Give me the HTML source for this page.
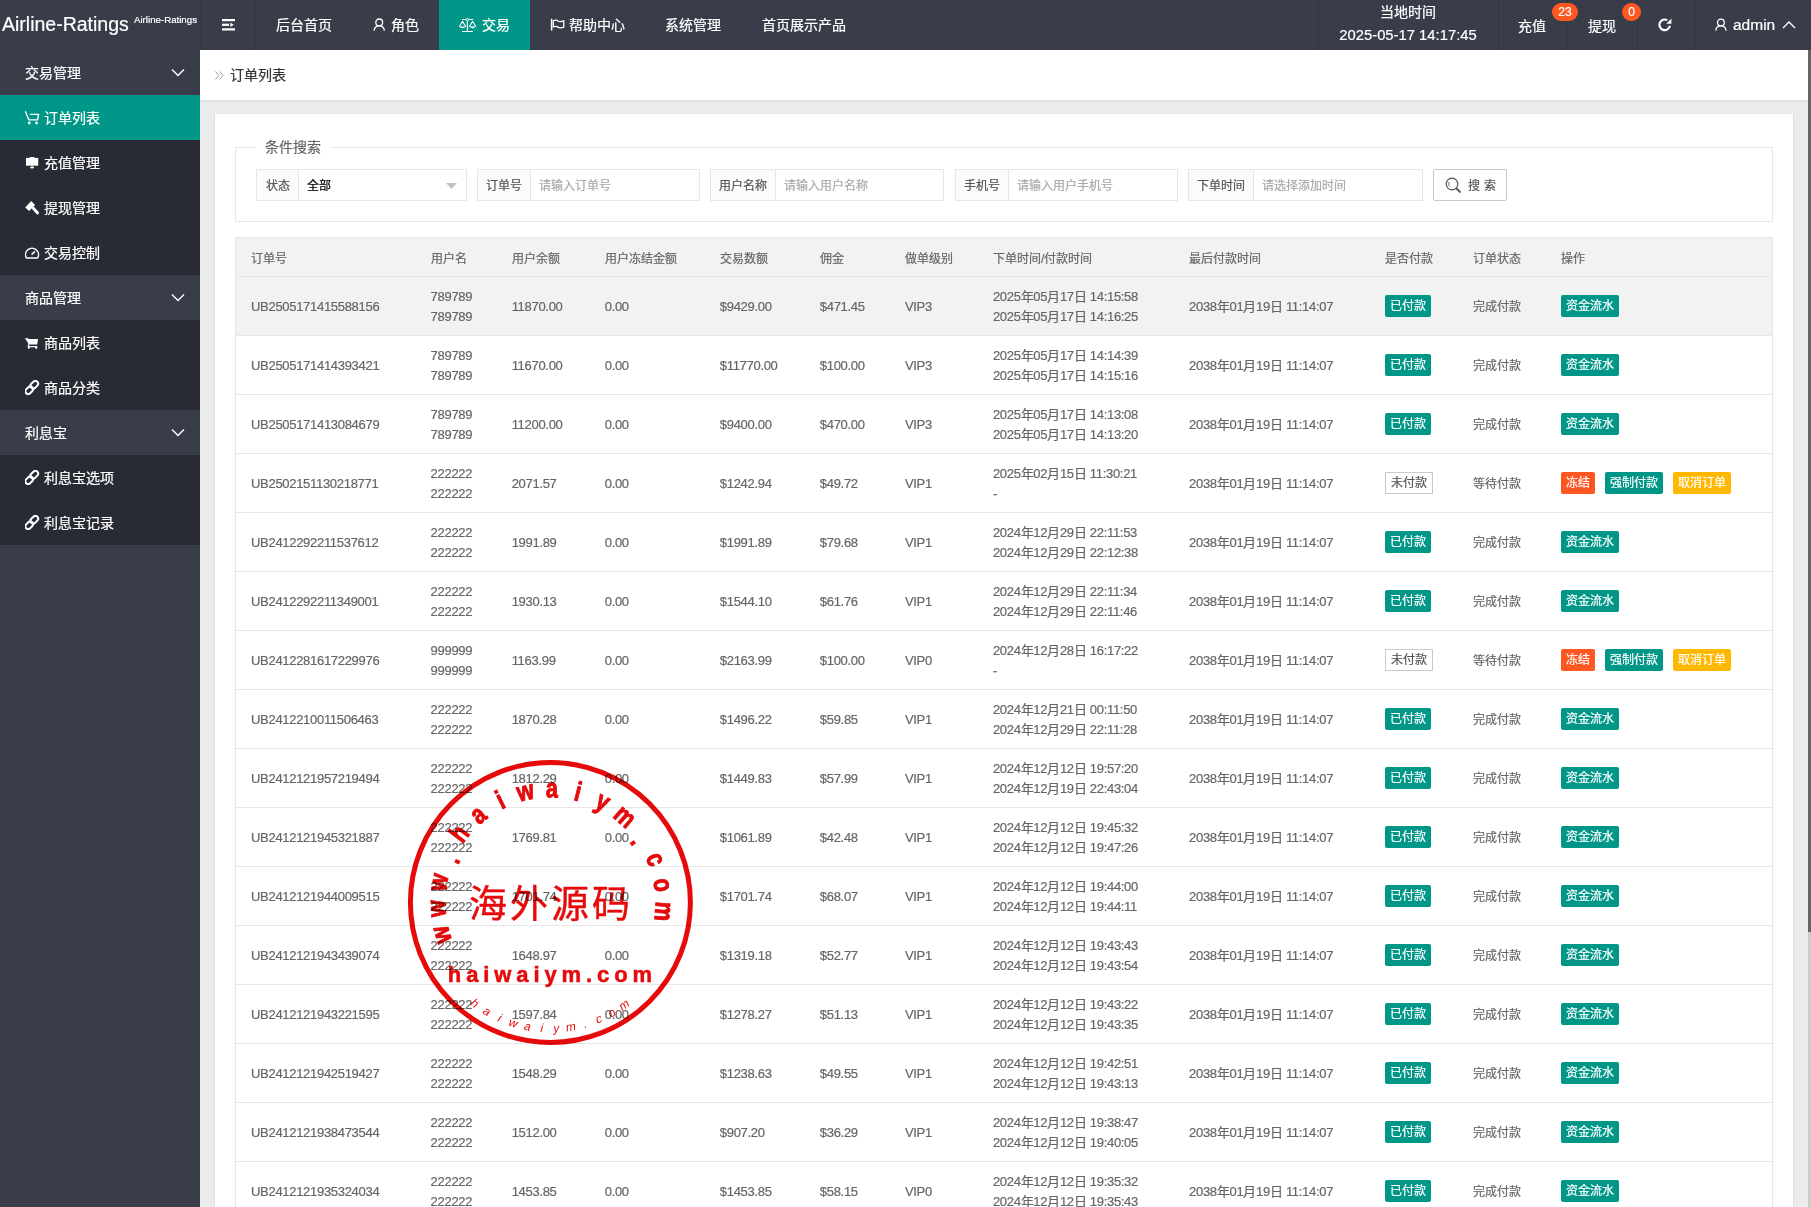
<!DOCTYPE html>
<html lang="zh-CN">
<head>
<meta charset="utf-8">
<title>Airline-Ratings</title>
<style>
*{box-sizing:border-box;margin:0;padding:0}
html,body{width:1811px;height:1207px;overflow:hidden}
body{-webkit-text-stroke:0.2px currentColor;font-family:"Liberation Sans",sans-serif;background:#ececec;color:#666;font-size:12px;position:relative}
.abs{position:absolute}
/* header */
#hd{position:absolute;left:0;top:0;width:1811px;height:50px;background:#393D49;color:#fff}
#hd .sep{position:absolute;top:0;width:1px;height:50px;background:#32363f}
#logo1{position:absolute;left:2px;top:12px;font-size:19.5px;line-height:24px;color:#fff;white-space:nowrap}
#logo2{position:absolute;left:134px;top:14px;font-size:9.7px;line-height:12px;color:#fff;white-space:nowrap}
.nav{position:absolute;top:0;height:50px;line-height:50px;font-size:14px;color:#fff;white-space:nowrap}
.nav svg{position:absolute}
#act{position:absolute;left:439px;top:0;width:91px;height:50px;background:#009688}
.badge{position:absolute;z-index:2;top:3px;height:18px;line-height:18px;border-radius:9px;background:#FF5722;color:#fff;font-size:12px;text-align:center}
/* sidebar */
#sd{position:absolute;left:0;top:50px;width:200px;height:1157px;background:#393D49}
.grp{position:absolute;left:0;width:200px;height:45px;line-height:45px;background:#393D49;color:#fff;font-size:14px}
.grp span{position:absolute;left:25px;top:1px}
.grp svg{position:absolute;left:171px;top:18px}
.sub{position:absolute;left:0;width:200px;height:45px;line-height:45px;background:#282B33;color:#fff;font-size:14px}
.sub span{position:absolute;left:44px;top:1px}
.sub svg{position:absolute;left:25px;top:15px}
.sub.on{background:#009688}
/* breadcrumb */
#bc{position:absolute;left:200px;top:50px;width:1608px;height:50px;background:#fff;box-shadow:0 1px 2px rgba(0,0,0,.08)}
#bc .t{position:absolute;left:30px;top:0;line-height:50px;font-size:14px;color:#333}
/* scrollbar */
#sb{position:absolute;left:1808px;top:50px;width:3px;height:882px;background:#646464}
#sbt{position:absolute;left:1808px;top:932px;width:3px;height:275px;background:#cdcdcd}
/* card */
#card{position:absolute;left:215px;top:114px;width:1578px;height:1100px;background:#fff;box-shadow:1px 0 1px #e0e0e0,-1px 0 1px #e0e0e0}
#fs{position:absolute;left:20px;top:33px;width:1538px;height:75px;border:1px solid #e6e6e6}
#lg{position:absolute;left:40px;top:23px;padding:0 10px;background:#fff;font-size:14px;line-height:20px;color:#666}
.ig{position:absolute;top:55px;height:32px;border:1px solid #e6e6e6;background:#fff}
.ig .lb{position:absolute;left:0;top:0;height:30px;line-height:33px;background:#FBFBFB;border-right:1px solid #e6e6e6;color:#555;font-size:12px;text-align:center}
.ig .ph{position:absolute;top:0;line-height:33px;font-size:12px;color:#a9a9a9;white-space:nowrap}
#btn{position:absolute;left:1218px;top:55px;width:74px;height:32px;border:1px solid #C9C9C9;border-radius:2px;background:#fff;color:#555}
/* table */
#tb{position:absolute;left:20px;top:123px;border-collapse:collapse;table-layout:fixed;width:1538px;border:1px solid #e6e6e6}
#tb th{height:39px;background:#f2f2f2;text-align:left;font-weight:normal;padding:0 15px;font-size:12px;color:#666;border-bottom:1px solid #e6e6e6;white-space:nowrap;overflow:hidden}
#tb td{height:59px;padding:2px 15px 0;font-size:13px;letter-spacing:-0.3px;color:#666;border-bottom:1px solid #e6e6e6;white-space:nowrap;line-height:20px;vertical-align:middle}
#tb tr.hov td{background:#f2f2f2}
.two{line-height:20px}
.bd{display:inline-block;position:relative;top:-1px;letter-spacing:0;height:22px;line-height:23px;padding:0 5px;font-size:12px;color:#fff;border-radius:2px;margin-right:10px;vertical-align:middle}
.bd.g{background:#009688}
.bd.r{background:#FF5722}
.bd.y{background:#FFB800}
.bd.o{border:1px solid #C9C9C9;color:#555;background:#fff;line-height:21px;border-radius:0}
/* stamp */
#stamp{position:absolute;left:400px;top:750px;width:300px;height:300px;mix-blend-mode:multiply}
#stamp text{fill:#e60a0a;text-anchor:middle}
#stamp .t1{font-family:"Liberation Sans",sans-serif;font-weight:bold;font-size:27px;dominant-baseline:central;stroke:#e60a0a;stroke-width:1px}
#stamp .t3{font-family:"Liberation Sans",sans-serif;font-size:12px;dominant-baseline:central;font-style:italic}
#stamp .t2{font-family:"Liberation Serif",serif;font-size:38px;letter-spacing:3px;stroke:#e60a0a;stroke-width:0.4px}
#stamp .t4{font-family:"Liberation Sans",sans-serif;font-weight:bold;font-size:22px;letter-spacing:4.9px;stroke:#e60a0a;stroke-width:0.5px}
</style>
</head>
<body>
<div id="hd">
  <div id="logo1">Airline-Ratings</div>
  <div id="logo2">Airline-Ratings</div>
  <div class="sep" style="left:200px"></div>
  <div class="sep" style="left:255px"></div>
  <svg class="abs" style="left:221px;top:18px" width="15" height="14" viewBox="0 0 15 14"><rect x="1" y="1" width="13" height="2.2" fill="#fff"/><rect x="1" y="5.7" width="7" height="2.2" fill="#fff"/><path d="M9.3 4.8 L12.8 6.8 L9.3 8.9Z" fill="#fff"/><rect x="1" y="10.3" width="13" height="2.2" fill="#fff"/></svg>
  <div class="nav" style="left:276px">后台首页</div>
  <svg class="abs" style="left:372px;top:17px" width="15" height="15" viewBox="0 0 15 15"><circle cx="7.2" cy="5.4" r="3.4" fill="none" stroke="#fff" stroke-width="1.3"/><path d="M2 13.6 C2.5 10 4.5 8.8 7.2 8.8 C9.9 8.8 11.9 10 12.4 13.6" fill="none" stroke="#fff" stroke-width="1.3"/></svg>
  <div class="nav" style="left:391px">角色</div>
  <div id="act"></div>
  <svg class="abs" style="left:458px;top:18px" width="19" height="15" viewBox="0 0 19 15"><path d="M4 1.5 H8.2 M10.6 1.5 H15.2 M9.4 2.7 V13.5 M4 13.5 H15" stroke="#fff" stroke-width="1.2" fill="none"/><circle cx="9.4" cy="1.5" r="1.1" fill="none" stroke="#fff" stroke-width="1"/><path d="M4.5 3.3 L1.3 8.8 M4.5 3.3 L7.8 8.8 M14.6 3.3 L11.3 8.8 M14.6 3.3 L17.9 8.8" stroke="#fff" stroke-width="1.1" fill="none"/><path d="M1.1 8.6 Q4.5 12 8 8.6 Z M11.1 8.6 Q14.6 12 18.1 8.6 Z" fill="#fff"/></svg>
  <div class="nav" style="left:482px">交易</div>
  <svg class="abs" style="left:549px;top:18px" width="16" height="14" viewBox="0 0 16 14"><path d="M2.6 0.8 V12.6" stroke="#fff" stroke-width="1.5"/><path d="M4.3 2.9 C6 1.8 8 2.2 9.5 3.2 C11 4 12.8 3.6 14.8 2.9 V9.1 C12.8 9.8 11 10.2 9.5 9.4 C8 8.4 6 8.2 4.3 8.8 Z" fill="none" stroke="#fff" stroke-width="1.3"/></svg>
  <div class="nav" style="left:569px">帮助中心</div>
  <div class="nav" style="left:665px">系统管理</div>
  <div class="nav" style="left:762px">首页展示产品</div>

  <div class="sep" style="left:1318px"></div>
  <div class="abs" style="left:1318px;top:4px;width:180px;text-align:center;font-size:14px;line-height:16px;color:#fff">当地时间</div>
  <div class="abs" style="left:1318px;top:27px;width:180px;text-align:center;font-size:14.8px;line-height:16px;color:#fff">2025-05-17 14:17:45</div>
  <div class="sep" style="left:1498px"></div>
  <div class="sep" style="left:1567px"></div>
  <div class="sep" style="left:1637px"></div>
  <div class="sep" style="left:1695px"></div>
  <div class="nav" style="left:1518px;top:1px">充值</div>
  <div class="badge" style="left:1552px;width:26px">23</div>
  <div class="nav" style="left:1588px;top:1px">提现</div>
  <div class="badge" style="left:1622px;width:19px">0</div>
  <svg class="abs" style="left:1657px;top:17px" width="16" height="16" viewBox="0 0 16 16"><path d="M10.35 3.21 A5.3 5.3 0 1 0 12.92 8.72" fill="none" stroke="#fff" stroke-width="2.1"/><path d="M14.4 1.5 V6.7 H9.3 Z" fill="#fff"/></svg>
  <svg class="abs" style="left:1713px;top:17px" width="15" height="15" viewBox="0 0 15 15"><circle cx="7.9" cy="5.5" r="3.4" fill="none" stroke="#fff" stroke-width="1.3"/><path d="M2.7 13.6 C3.2 10 5.2 8.9 7.9 8.9 C10.6 8.9 12.6 10 13.1 13.6" fill="none" stroke="#fff" stroke-width="1.3"/></svg>
  <div class="nav" style="left:1733px;font-size:15.5px">admin</div>
  <svg class="abs" style="left:1782px;top:20px" width="14" height="9" viewBox="0 0 14 9"><path d="M1 8 L7 2 L13 8" fill="none" stroke="#fff" stroke-width="1.4"/></svg>
</div>

<div id="sd">
  <div class="grp" style="top:0"><span>交易管理</span><svg width="14" height="9" viewBox="0 0 14 9"><path d="M1 1.5 L7 7.5 L13 1.5" fill="none" stroke="#fff" stroke-width="1.4"/></svg></div>
  <div class="sub on" style="top:45px"><svg width="15" height="15" viewBox="0 0 15 15"><path d="M0.3 1.2 L3.9 9.9 H12.6 L13.6 4.4 H4.9" fill="none" stroke="#fff" stroke-width="1.4" stroke-linejoin="round"/><circle cx="4.3" cy="13" r="1.4" fill="#fff"/><circle cx="11.6" cy="13" r="1.4" fill="#fff"/></svg><span>订单列表</span></div>
  <div class="sub" style="top:90px"><svg width="15" height="15" viewBox="0 0 15 15"><rect x="1" y="2.9" width="12.2" height="7.8" fill="#fff"/><rect x="4.5" y="2.1" width="5" height="1" fill="#fff"/><ellipse cx="7.1" cy="12.6" rx="2.1" ry="0.9" fill="#fff"/><path d="M7.1 10.7 V12" stroke="#fff" stroke-width="1"/></svg><span>充值管理</span></div>
  <div class="sub" style="top:135px"><svg width="15" height="15" viewBox="0 0 15 15"><path d="M0.2 7.4 L6.2 1 L10.1 5.1 L4.1 11 Z" fill="#fff"/><path d="M8.3 8.3 L12.6 13" stroke="#fff" stroke-width="2.8" stroke-linecap="round"/></svg><span>提现管理</span></div>
  <div class="sub" style="top:180px"><svg width="15" height="15" viewBox="0 0 15 15"><path d="M1.5 13.1 A6.5 6.5 0 1 1 12.5 13.1 Z" fill="none" stroke="#fff" stroke-width="1.5" stroke-linejoin="round"/><path d="M6.6 9.6 L9.9 6.4" stroke="#fff" stroke-width="1.5"/></svg><span>交易控制</span></div>
  <div class="grp" style="top:225px"><span>商品管理</span><svg width="14" height="9" viewBox="0 0 14 9"><path d="M1 1.5 L7 7.5 L13 1.5" fill="none" stroke="#fff" stroke-width="1.4"/></svg></div>
  <div class="sub" style="top:270px"><svg width="15" height="15" viewBox="0 0 15 15"><path d="M-0.2 3.3 H2.9 V4.1 H13 L12.2 9.5 H4.2 Z" fill="#fff"/><path d="M2.5 3.5 L4.2 9.5" stroke="#fff" stroke-width="1.5"/><rect x="2.9" y="11.1" width="9.3" height="1.2" fill="#fff"/><rect x="2.9" y="11.1" width="1.8" height="2.6" fill="#fff"/><rect x="10.2" y="11.1" width="2" height="2.6" fill="#fff"/><path d="M3.5 9.5 V11.5" stroke="#fff" stroke-width="1.2"/></svg><span>商品列表</span></div>
  <div class="sub" style="top:315px"><svg width="15" height="15" viewBox="0 0 15 15"><rect x="6.55" y="0.45" width="5.5" height="8.5" rx="2.75" transform="rotate(45 9.3 4.7)" fill="none" stroke="#fff" stroke-width="2"/><rect x="1.45" y="6.05" width="5.5" height="8.5" rx="2.75" transform="rotate(45 4.2 10.3)" fill="none" stroke="#fff" stroke-width="2"/></svg><span>商品分类</span></div>
  <div class="grp" style="top:360px"><span>利息宝</span><svg width="14" height="9" viewBox="0 0 14 9"><path d="M1 1.5 L7 7.5 L13 1.5" fill="none" stroke="#fff" stroke-width="1.4"/></svg></div>
  <div class="sub" style="top:405px"><svg width="15" height="15" viewBox="0 0 15 15"><rect x="6.55" y="0.45" width="5.5" height="8.5" rx="2.75" transform="rotate(45 9.3 4.7)" fill="none" stroke="#fff" stroke-width="2"/><rect x="1.45" y="6.05" width="5.5" height="8.5" rx="2.75" transform="rotate(45 4.2 10.3)" fill="none" stroke="#fff" stroke-width="2"/></svg><span>利息宝选项</span></div>
  <div class="sub" style="top:450px"><svg width="15" height="15" viewBox="0 0 15 15"><rect x="6.55" y="0.45" width="5.5" height="8.5" rx="2.75" transform="rotate(45 9.3 4.7)" fill="none" stroke="#fff" stroke-width="2"/><rect x="1.45" y="6.05" width="5.5" height="8.5" rx="2.75" transform="rotate(45 4.2 10.3)" fill="none" stroke="#fff" stroke-width="2"/></svg><span>利息宝记录</span></div>
</div>

<div id="bc">
  <svg class="abs" style="left:15px;top:21px" width="9" height="9" viewBox="0 0 9 9"><path d="M0.5 0.5 L4 4.5 L0.5 8.5 M4.5 0.5 L8 4.5 L4.5 8.5" fill="none" stroke="#999" stroke-width="1"/></svg>
  <div class="t">订单列表</div>
</div>
<div id="sb"></div><div id="sbt"></div>

<div id="card">
  <div id="fs"></div>
  <div id="lg">条件搜索</div>
  <div class="ig" style="left:41px;width:211px"><div class="lb" style="width:42px">状态</div><div class="ph" style="left:50px;color:#000">全部</div><svg class="abs" style="left:189px;top:13px" width="11" height="6" viewBox="0 0 11 6"><path d="M0 0 H11 L5.5 6Z" fill="#C2C2C2"/></svg></div>
  <div class="ig" style="left:262px;width:223px"><div class="lb" style="width:53px">订单号</div><div class="ph" style="left:61px">请输入订单号</div></div>
  <div class="ig" style="left:495px;width:234px"><div class="lb" style="width:65px">用户名称</div><div class="ph" style="left:73px">请输入用户名称</div></div>
  <div class="ig" style="left:740px;width:223px"><div class="lb" style="width:53px">手机号</div><div class="ph" style="left:61px">请输入用户手机号</div></div>
  <div class="ig" style="left:973px;width:235px"><div class="lb" style="width:65px">下单时间</div><div class="ph" style="left:73px">请选择添加时间</div></div>
  <div id="btn"><svg class="abs" style="left:11px;top:7px" width="17" height="17" viewBox="0 0 17 17"><circle cx="7" cy="7" r="5.8" fill="none" stroke="#555" stroke-width="1.2"/><path d="M11 11 L15.5 15.5" stroke="#555" stroke-width="1.8"/><path d="M4.5 5 A3 3 0 0 0 5 9.5" fill="none" stroke="#555" stroke-width="0.9"/></svg><div class="abs" style="left:34px;top:1px;line-height:30px;font-size:12px;letter-spacing:4px;white-space:nowrap">搜索</div></div>

  <table id="tb">
    <colgroup><col style="width:180px"><col style="width:81px"><col style="width:93px"><col style="width:115px"><col style="width:100px"><col style="width:85px"><col style="width:88px"><col style="width:196px"><col style="width:196px"><col style="width:88px"><col style="width:88px"><col style="width:226px"></colgroup>
    <thead><tr><th>订单号</th><th>用户名</th><th>用户余额</th><th>用户冻结金额</th><th>交易数额</th><th>佣金</th><th>做单级别</th><th>下单时间/付款时间</th><th>最后付款时间</th><th>是否付款</th><th>订单状态</th><th>操作</th></tr></thead>
    <tbody>
<tr class="hov"><td>UB2505171415588156</td><td><div class="two">789789<br>789789</div></td><td>11870.00</td><td>0.00</td><td>$9429.00</td><td>$471.45</td><td>VIP3</td><td><div class="two">2025年05月17日 14:15:58<br>2025年05月17日 14:16:25</div></td><td>2038年01月19日 11:14:07</td><td><span class="bd g">已付款</span></td><td><span style="font-size:12px;letter-spacing:0">完成付款</span></td><td><span class="bd g">资金流水</span></td></tr>
<tr><td>UB2505171414393421</td><td><div class="two">789789<br>789789</div></td><td>11670.00</td><td>0.00</td><td>$11770.00</td><td>$100.00</td><td>VIP3</td><td><div class="two">2025年05月17日 14:14:39<br>2025年05月17日 14:15:16</div></td><td>2038年01月19日 11:14:07</td><td><span class="bd g">已付款</span></td><td><span style="font-size:12px;letter-spacing:0">完成付款</span></td><td><span class="bd g">资金流水</span></td></tr>
<tr><td>UB2505171413084679</td><td><div class="two">789789<br>789789</div></td><td>11200.00</td><td>0.00</td><td>$9400.00</td><td>$470.00</td><td>VIP3</td><td><div class="two">2025年05月17日 14:13:08<br>2025年05月17日 14:13:20</div></td><td>2038年01月19日 11:14:07</td><td><span class="bd g">已付款</span></td><td><span style="font-size:12px;letter-spacing:0">完成付款</span></td><td><span class="bd g">资金流水</span></td></tr>
<tr><td>UB2502151130218771</td><td><div class="two">222222<br>222222</div></td><td>2071.57</td><td>0.00</td><td>$1242.94</td><td>$49.72</td><td>VIP1</td><td><div class="two">2025年02月15日 11:30:21<br>-</div></td><td>2038年01月19日 11:14:07</td><td><span class="bd o">未付款</span></td><td><span style="font-size:12px;letter-spacing:0">等待付款</span></td><td><span class="bd r">冻结</span><span class="bd g">强制付款</span><span class="bd y">取消订单</span></td></tr>
<tr><td>UB2412292211537612</td><td><div class="two">222222<br>222222</div></td><td>1991.89</td><td>0.00</td><td>$1991.89</td><td>$79.68</td><td>VIP1</td><td><div class="two">2024年12月29日 22:11:53<br>2024年12月29日 22:12:38</div></td><td>2038年01月19日 11:14:07</td><td><span class="bd g">已付款</span></td><td><span style="font-size:12px;letter-spacing:0">完成付款</span></td><td><span class="bd g">资金流水</span></td></tr>
<tr><td>UB2412292211349001</td><td><div class="two">222222<br>222222</div></td><td>1930.13</td><td>0.00</td><td>$1544.10</td><td>$61.76</td><td>VIP1</td><td><div class="two">2024年12月29日 22:11:34<br>2024年12月29日 22:11:46</div></td><td>2038年01月19日 11:14:07</td><td><span class="bd g">已付款</span></td><td><span style="font-size:12px;letter-spacing:0">完成付款</span></td><td><span class="bd g">资金流水</span></td></tr>
<tr><td>UB2412281617229976</td><td><div class="two">999999<br>999999</div></td><td>1163.99</td><td>0.00</td><td>$2163.99</td><td>$100.00</td><td>VIP0</td><td><div class="two">2024年12月28日 16:17:22<br>-</div></td><td>2038年01月19日 11:14:07</td><td><span class="bd o">未付款</span></td><td><span style="font-size:12px;letter-spacing:0">等待付款</span></td><td><span class="bd r">冻结</span><span class="bd g">强制付款</span><span class="bd y">取消订单</span></td></tr>
<tr><td>UB2412210011506463</td><td><div class="two">222222<br>222222</div></td><td>1870.28</td><td>0.00</td><td>$1496.22</td><td>$59.85</td><td>VIP1</td><td><div class="two">2024年12月21日 00:11:50<br>2024年12月29日 22:11:28</div></td><td>2038年01月19日 11:14:07</td><td><span class="bd g">已付款</span></td><td><span style="font-size:12px;letter-spacing:0">完成付款</span></td><td><span class="bd g">资金流水</span></td></tr>
<tr><td>UB2412121957219494</td><td><div class="two">222222<br>222222</div></td><td>1812.29</td><td>0.00</td><td>$1449.83</td><td>$57.99</td><td>VIP1</td><td><div class="two">2024年12月12日 19:57:20<br>2024年12月19日 22:43:04</div></td><td>2038年01月19日 11:14:07</td><td><span class="bd g">已付款</span></td><td><span style="font-size:12px;letter-spacing:0">完成付款</span></td><td><span class="bd g">资金流水</span></td></tr>
<tr><td>UB2412121945321887</td><td><div class="two">222222<br>222222</div></td><td>1769.81</td><td>0.00</td><td>$1061.89</td><td>$42.48</td><td>VIP1</td><td><div class="two">2024年12月12日 19:45:32<br>2024年12月12日 19:47:26</div></td><td>2038年01月19日 11:14:07</td><td><span class="bd g">已付款</span></td><td><span style="font-size:12px;letter-spacing:0">完成付款</span></td><td><span class="bd g">资金流水</span></td></tr>
<tr><td>UB2412121944009515</td><td><div class="two">222222<br>222222</div></td><td>1701.74</td><td>0.00</td><td>$1701.74</td><td>$68.07</td><td>VIP1</td><td><div class="two">2024年12月12日 19:44:00<br>2024年12月12日 19:44:11</div></td><td>2038年01月19日 11:14:07</td><td><span class="bd g">已付款</span></td><td><span style="font-size:12px;letter-spacing:0">完成付款</span></td><td><span class="bd g">资金流水</span></td></tr>
<tr><td>UB2412121943439074</td><td><div class="two">222222<br>222222</div></td><td>1648.97</td><td>0.00</td><td>$1319.18</td><td>$52.77</td><td>VIP1</td><td><div class="two">2024年12月12日 19:43:43<br>2024年12月12日 19:43:54</div></td><td>2038年01月19日 11:14:07</td><td><span class="bd g">已付款</span></td><td><span style="font-size:12px;letter-spacing:0">完成付款</span></td><td><span class="bd g">资金流水</span></td></tr>
<tr><td>UB2412121943221595</td><td><div class="two">222222<br>222222</div></td><td>1597.84</td><td>0.00</td><td>$1278.27</td><td>$51.13</td><td>VIP1</td><td><div class="two">2024年12月12日 19:43:22<br>2024年12月12日 19:43:35</div></td><td>2038年01月19日 11:14:07</td><td><span class="bd g">已付款</span></td><td><span style="font-size:12px;letter-spacing:0">完成付款</span></td><td><span class="bd g">资金流水</span></td></tr>
<tr><td>UB2412121942519427</td><td><div class="two">222222<br>222222</div></td><td>1548.29</td><td>0.00</td><td>$1238.63</td><td>$49.55</td><td>VIP1</td><td><div class="two">2024年12月12日 19:42:51<br>2024年12月12日 19:43:13</div></td><td>2038年01月19日 11:14:07</td><td><span class="bd g">已付款</span></td><td><span style="font-size:12px;letter-spacing:0">完成付款</span></td><td><span class="bd g">资金流水</span></td></tr>
<tr><td>UB2412121938473544</td><td><div class="two">222222<br>222222</div></td><td>1512.00</td><td>0.00</td><td>$907.20</td><td>$36.29</td><td>VIP1</td><td><div class="two">2024年12月12日 19:38:47<br>2024年12月12日 19:40:05</div></td><td>2038年01月19日 11:14:07</td><td><span class="bd g">已付款</span></td><td><span style="font-size:12px;letter-spacing:0">完成付款</span></td><td><span class="bd g">资金流水</span></td></tr>
<tr><td>UB2412121935324034</td><td><div class="two">222222<br>222222</div></td><td>1453.85</td><td>0.00</td><td>$1453.85</td><td>$58.15</td><td>VIP0</td><td><div class="two">2024年12月12日 19:35:32<br>2024年12月12日 19:35:43</div></td><td>2038年01月19日 11:14:07</td><td><span class="bd g">已付款</span></td><td><span style="font-size:12px;letter-spacing:0">完成付款</span></td><td><span class="bd g">资金流水</span></td></tr>
    </tbody>
  </table>
</div>

<svg id="stamp" width="300" height="300" viewBox="0 0 300 300">
<circle cx="150.4" cy="152.5" r="140" fill="none" stroke="#e60a0a" stroke-width="5"/>
<text transform="translate(40.62,185.02) rotate(-106.50) scale(0.8,1)" class="t1">w</text>
<text transform="translate(36.07,158.69) rotate(-93.10) scale(0.8,1)" class="t1">w</text>
<text transform="translate(37.75,132.03) rotate(-79.70) scale(0.8,1)" class="t1">w</text>
<text transform="translate(50.59,108.69) rotate(-66.30) scale(0.8,1)" class="t1">.</text>
<text transform="translate(59.08,83.43) rotate(-52.90) scale(0.8,1)" class="t1">h</text>
<text transform="translate(77.57,64.15) rotate(-39.50) scale(0.8,1)" class="t1">a</text>
<text transform="translate(100.03,49.68) rotate(-26.10) scale(0.8,1)" class="t1">i</text>
<text transform="translate(125.23,40.80) rotate(-12.70) scale(0.8,1)" class="t1">w</text>
<text transform="translate(151.80,38.01) rotate(0.70) scale(0.8,1)" class="t1">a</text>
<text transform="translate(178.29,41.45) rotate(14.10) scale(0.8,1)" class="t1">i</text>
<text transform="translate(203.27,50.94) rotate(27.50) scale(0.8,1)" class="t1">y</text>
<text transform="translate(225.37,65.95) rotate(40.90) scale(0.8,1)" class="t1">m</text>
<text transform="translate(238.92,88.89) rotate(54.30) scale(0.8,1)" class="t1">.</text>
<text transform="translate(256.34,109.05) rotate(67.70) scale(0.8,1)" class="t1">c</text>
<text transform="translate(263.52,134.79) rotate(81.10) scale(0.8,1)" class="t1">o</text>
<text transform="translate(264.55,161.48) rotate(94.50) scale(0.8,1)" class="t1">m</text>
<text transform="translate(74.75,253.26) rotate(36.90)" class="t3">h</text>
<text transform="translate(86.83,261.29) rotate(30.30)" class="t3">a</text>
<text transform="translate(99.75,267.87) rotate(23.70)" class="t3">i</text>
<text transform="translate(113.35,272.93) rotate(17.10)" class="t3">w</text>
<text transform="translate(127.44,276.39) rotate(10.50)" class="t3">a</text>
<text transform="translate(141.83,278.21) rotate(3.90)" class="t3">i</text>
<text transform="translate(156.34,278.36) rotate(-2.70)" class="t3">y</text>
<text transform="translate(170.76,276.84) rotate(-9.30)" class="t3">m</text>
<text transform="translate(184.92,273.68) rotate(-15.90)" class="t3">.</text>
<text transform="translate(198.62,268.91) rotate(-22.50)" class="t3">c</text>
<text transform="translate(211.68,262.60) rotate(-29.10)" class="t3">o</text>
<text transform="translate(223.93,254.82) rotate(-35.70)" class="t3">m</text>
<text x="151.4" y="166.5" class="t2">海外源码</text>
<text x="152.4" y="231.5" class="t4">haiwaiym.com</text>
</svg>
</body>
</html>
